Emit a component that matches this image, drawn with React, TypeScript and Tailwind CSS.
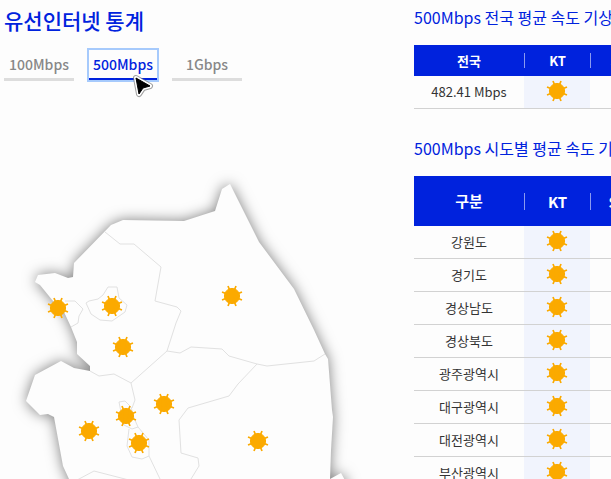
import { useState } from "react";

const speeds = ["100Mbps", "500Mbps", "1Gbps"];

const regions = [
  "강원도",
  "경기도",
  "경상남도",
  "경상북도",
  "광주광역시",
  "대구광역시",
  "대전광역시",
  "부산광역시",
];

const markers = [
  [58, 308],
  [112, 306],
  [232, 296],
  [123, 347],
  [89, 431],
  [126, 416],
  [164, 404],
  [139, 443],
  [258, 441],
];

const outline =
  "M35 282L38 275L55 273L68 278L73 277L74 263L111 225L123 220L184 221L215 211L222 189L230 184L259 242L294 289L314 330L325 354L328 359L332 410L333 417L331 450L330 479L341 473L347 484V540H90L69 479L63 466L54 417L48 414L40 415L26 401L35 375L61 361L74 368L90 371V366L77 354V342L71 327L64 312L53 301L40 285Z";

const borders = [
  "M105 232L120 244H134L161 267L155 301L177 307L181 311L176 323L167 351",
  "M90 371L99 376L114 374L131 383L167 351L180 353L191 347L222 349L229 356L257 364L267 366L314 361L325 354",
  "M257 364L238 384L229 396L188 408L179 420L181 453L198 458L199 466L191 479L185 490",
  "M131 383L135 400L132 408",
  "M119 402L125 401L131 407L134 418L138 427L132 429L124 425L121 412Z",
  "M129 429L127 446L132 457L142 459L149 456V440L138 427",
  "M149 456L160 479L165 490",
  "M60 489L79 479L94 471L125 479L160 488",
  "M86 303L89 301L98 299L103 295L108 287H117L119 298L127 305L125 312L112 321L100 320L91 314Z",
  "M65 301H75L83 309L79 316L78 323L71 327",
];

function SunShape() {
  return (
    <g fill="#fbaa00" stroke="#fbaa00">
      <circle r="7.6" />
      <path
        strokeWidth="1.7"
        d="M4 -10L-4 10M-4 -10L4 10M10 -4L-10 4M-10 -4L10 4"
      />
    </g>
  );
}

function Sun() {
  return (
    <svg className="mx-auto block" width="22" height="22" viewBox="-11 -11 22 22" role="img" aria-label="맑음">
      <SunShape />
    </svg>
  );
}

function Cursor() {
  return (
    <svg
      className="pointer-events-none absolute top-[70px] left-[128px]"
      width="30"
      height="32"
      viewBox="128 70 30 32"
      aria-hidden="true"
    >
      <path
        d="M136 78L150 86L143 88L139 94Z"
        fill="none"
        stroke="#777"
        strokeWidth="6"
        strokeLinejoin="round"
        opacity="0.7"
      />
      <path
        d="M136 78L150 86L143 88L139 94Z"
        fill="none"
        stroke="#fff"
        strokeWidth="4"
        strokeLinejoin="round"
      />
      <path d="M136 78L150 86L143 88L139 94Z" fill="#000" stroke="#000" strokeWidth="1" />
    </svg>
  );
}

function RegionMap() {
  return (
    <svg className="block w-full" viewBox="0 81 410 440" role="img" aria-label="지역별 지도">
      <defs>
        <filter id="map-shadow" x="-20%" y="-20%" width="140%" height="140%" colorInterpolationFilters="sRGB">
          <feDropShadow dx="0" dy="0" stdDeviation="7" floodColor="#000" floodOpacity="0.5" />
        </filter>
      </defs>
      <path d={outline} fill="#fdfdfd" filter="url(#map-shadow)" />
      <g fill="none" stroke="#e1e1e1" strokeWidth="1">
        {borders.map((d) => (
          <path key={d} d={d} />
        ))}
      </g>
      {markers.map(([x, y]) => (
        <g key={`${x}-${y}`} transform={`translate(${x} ${y})`}>
          <SunShape />
        </g>
      ))}
    </svg>
  );
}

function Columns() {
  return (
    <colgroup>
      <col className="w-[110px]" />
      <col className="w-[66px]" />
      <col className="w-[66px]" />
    </colgroup>
  );
}

export default function App() {
  const [active, setActive] = useState("500Mbps");

  return (
    <main className="relative flex h-screen items-start overflow-hidden bg-[#fdfdfd] font-['Noto_Sans_CJK_KR','Noto_Sans',sans-serif] text-[#333333]">
      <section className="w-[410px] shrink-0">
        <div className="px-1 pt-1">
          <h1 className="text-[21px] leading-8 font-medium text-[#0022dd]">유선인터넷 통계</h1>
          <div className="mt-[13px] flex gap-[14px]">
            {speeds.map((speed) => (
              <button
                key={speed}
                type="button"
                aria-pressed={active === speed}
                onClick={() => setActive(speed)}
                className={
                  active === speed
                    ? "h-8 w-[70px] border-b-3 border-[#0022dd] text-[14px] leading-7 font-medium text-[#0022dd] outline-2 -outline-offset-1 outline-[#a6cafc]"
                    : "h-8 w-[70px] border-b-3 border-[#dddddd] text-[14px] leading-7 font-medium text-[#888888]"
                }
              >
                {speed}
              </button>
            ))}
          </div>
        </div>
        <RegionMap />
      </section>

      <section className="min-w-[242px] flex-1 pl-1">
        <h2 className="mb-[13px] pt-[2px] text-[16px] leading-[30px] whitespace-nowrap text-[#0022dd]">
          500Mbps 전국 평균 속도 기상
        </h2>
        <table className="w-[242px] table-fixed border-separate border-spacing-0 text-center text-[13px] leading-5">
          <Columns />
          <thead className="bg-[#0022dd] text-white">
            <tr className="h-[31px]">
              <th scope="col" className="p-0 font-bold">전국</th>
              <th scope="col" className="p-0 font-bold">
                <div className="h-[15px] border-l border-[#8a9af0] leading-[15px]">KT</div>
              </th>
              <th scope="col" className="p-0 font-bold">
                <div className="h-[15px] border-l border-[#8a9af0] leading-[15px]">SKB</div>
              </th>
            </tr>
          </thead>
          <tbody>
            <tr className="h-[33px]">
              <td className="border-b border-[#d2d2d2] p-0">482.41 Mbps</td>
              <td className="border-b border-[#d2d2d2] bg-[#f1f4fd] p-0 pb-[2px]"><Sun /></td>
              <td className="border-b border-[#d2d2d2] p-0" />
            </tr>
          </tbody>
        </table>

        <h2 className="mt-6 mb-[13px] text-[16px] leading-[30px] whitespace-nowrap text-[#0022dd]">
          500Mbps 시도별 평균 속도 기상
        </h2>
        <table className="w-[242px] table-fixed border-separate border-spacing-0 text-center text-[13px] leading-5">
          <Columns />
          <thead className="bg-[#0022dd] text-[15px] text-white">
            <tr className="h-[50px]">
              <th scope="col" className="p-0 font-bold">구분</th>
              <th scope="col" className="p-0 font-bold">
                <div className="h-[17px] border-l border-[#8a9af0] leading-[17px]">KT</div>
              </th>
              <th scope="col" className="p-0 font-bold">
                <div className="h-[17px] border-l border-[#8a9af0] leading-[17px]">SKB</div>
              </th>
            </tr>
          </thead>
          <tbody>
            {regions.map((region) => (
              <tr key={region} className="h-[33px]">
                <td className="border-b border-[#d2d2d2] p-0">{region}</td>
                <td className="border-b border-[#d2d2d2] bg-[#f1f4fd] p-0 pb-[2px]"><Sun /></td>
                <td className="border-b border-[#d2d2d2] p-0" />
              </tr>
            ))}
          </tbody>
        </table>
      </section>

      <Cursor />
    </main>
  );
}
